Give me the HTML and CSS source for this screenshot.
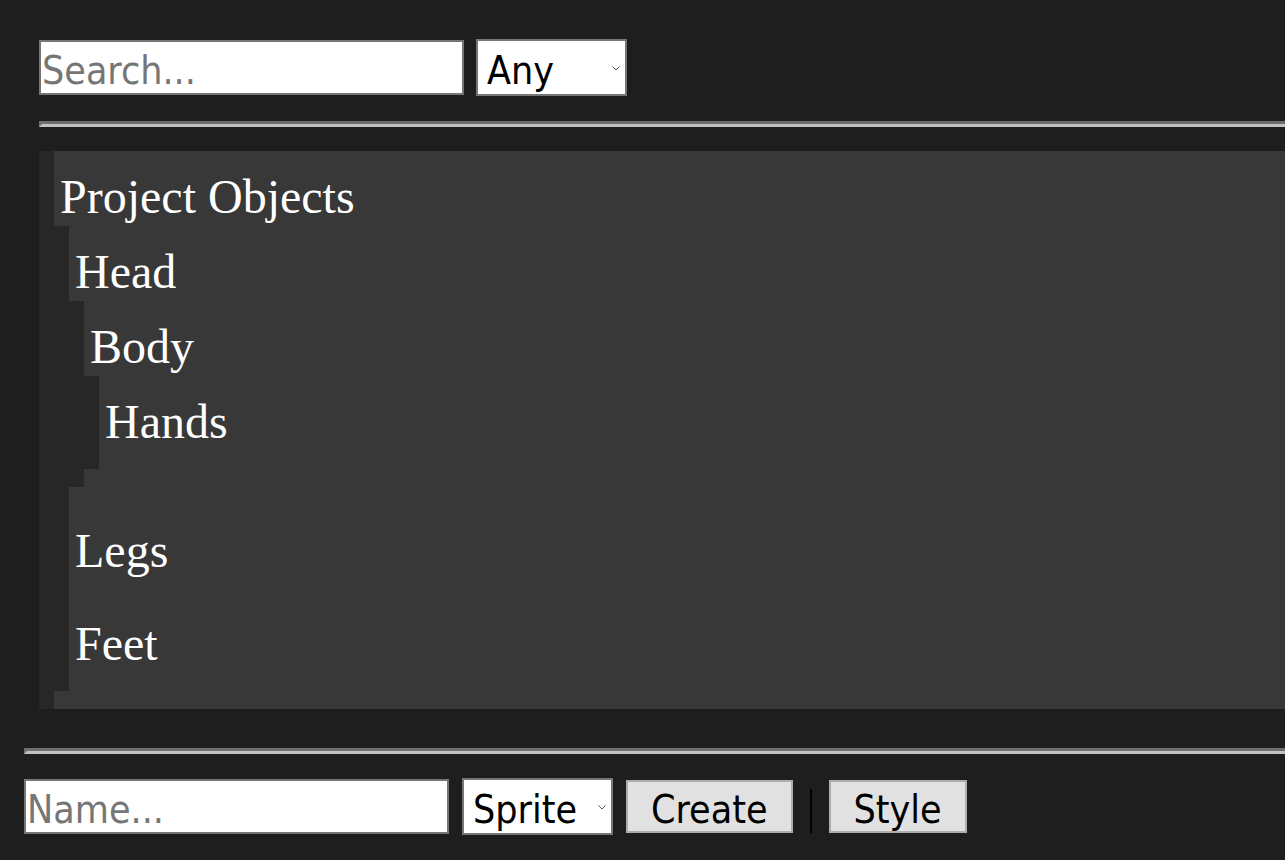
FILE: index.html
```html
<!DOCTYPE html>
<html lang="en">
<head>
<meta charset="utf-8">
<title>Project Objects</title>
<link rel="stylesheet" href="styles.css">
</head>
<body>
<main class="app">
  <section class="browser">
    <div class="toolbar">
      <input class="field field-search" type="text" placeholder="Search...">
      <span class="picker">
        <select class="picker-select"><option>Any</option></select>
        <svg class="picker-arrow" width="8" height="5" viewBox="0 0 8 5"><path d="M0.5 0.5 L4 4 L7.5 0.5" fill="none" stroke="#555" stroke-width="1"/></svg>
      </span>
    </div>
    <hr class="rule rule-top">
    <div class="children tree">
      <div class="node">
        <div class="label">Project Objects</div>
        <div class="children">
          <div class="node">
            <div class="label">Head</div>
            <div class="children">
              <div class="node">
                <div class="label">Body</div>
                <div class="children">
                  <div class="node"><div class="label">Hands</div></div>
                </div>
              </div>
            </div>
          </div>
          <div class="node"><div class="label">Legs</div></div>
          <div class="node"><div class="label">Feet</div></div>
        </div>
      </div>
    </div>
  </section>
  <hr class="rule rule-bottom">
  <div class="toolbar toolbar-create">
    <input class="field field-name" type="text" placeholder="Name...">
    <span class="picker">
      <select class="picker-select"><option>Sprite</option></select>
      <svg class="picker-arrow" width="8" height="5" viewBox="0 0 8 5"><path d="M0.5 0.5 L4 4 L7.5 0.5" fill="none" stroke="#555" stroke-width="1"/></svg>
    </span>
    <button class="btn" type="button">Create</button>
    <span class="divider"></span>
    <button class="btn" type="button">Style</button>
  </div>
</main>
</body>
</html>
```
FILE: styles.css
```css
html, body {
  margin: 0;
  padding: 0;
  background: #1e1e1e;
}

body {
  box-sizing: border-box;
  height: 860px;
  padding: 24px 0 0 24px;
  overflow: hidden;
}

.browser {
  padding: 15px 0 14px 15px;
}

.toolbar {
  display: flex;
  align-items: center;
  gap: 13px;
}

.browser .toolbar {
  gap: 12px;
}

.field,
.picker-select,
.btn {
  font-family: "DejaVu Sans Condensed", "DejaVu Sans", sans-serif;
  font-stretch: semi-condensed;
  font-size: 39px;
  color: #000;
  margin: 0;
  outline: none;
}

.field {
  box-sizing: border-box;
  width: 425px;
  height: 55px;
  padding: 5px 1px 0;
  border: 2px solid #767676;
  background: #fff;
}

.field::placeholder {
  color: #767676;
}

.picker {
  position: relative;
  display: inline-block;
}

.picker-select {
  box-sizing: border-box;
  display: block;
  width: 151px;
  height: 57px;
  padding: 5px 0 0 9px;
  border: 2px solid #767676;
  border-radius: 0;
  background: #fff;
  appearance: none;
  -webkit-appearance: none;
}

.picker-arrow {
  position: absolute;
  right: 7px;
  top: 27px;
}

.btn {
  box-sizing: border-box;
  height: 53px;
  padding: 5px 23px 0;
  border: 2px solid #adadad;
  border-radius: 0;
  background: #e1e1e1;
}

.divider {
  align-self: flex-end;
  width: 2px;
  height: 44px;
  margin: 0 4px 2px;
  background: #000;
}

.rule {
  height: 0;
  margin: 25px 0 24px;
  border-style: solid;
  border-width: 3px 0 3px 3px;
  border-color: #6e6e6e #c1c1c1 #c1c1c1 #6e6e6e;
}

.children {
  padding-left: 15px;
  background: #272727;
}

.node {
  padding-bottom: 18px;
  background: #383838;
}

.label {
  height: 57px;
  padding: 18px 0 0 6px;
  font-family: "Liberation Serif", "Times New Roman", serif;
  font-size: 48px;
  line-height: 55px;
  color: #fff;
  white-space: nowrap;
}
```
